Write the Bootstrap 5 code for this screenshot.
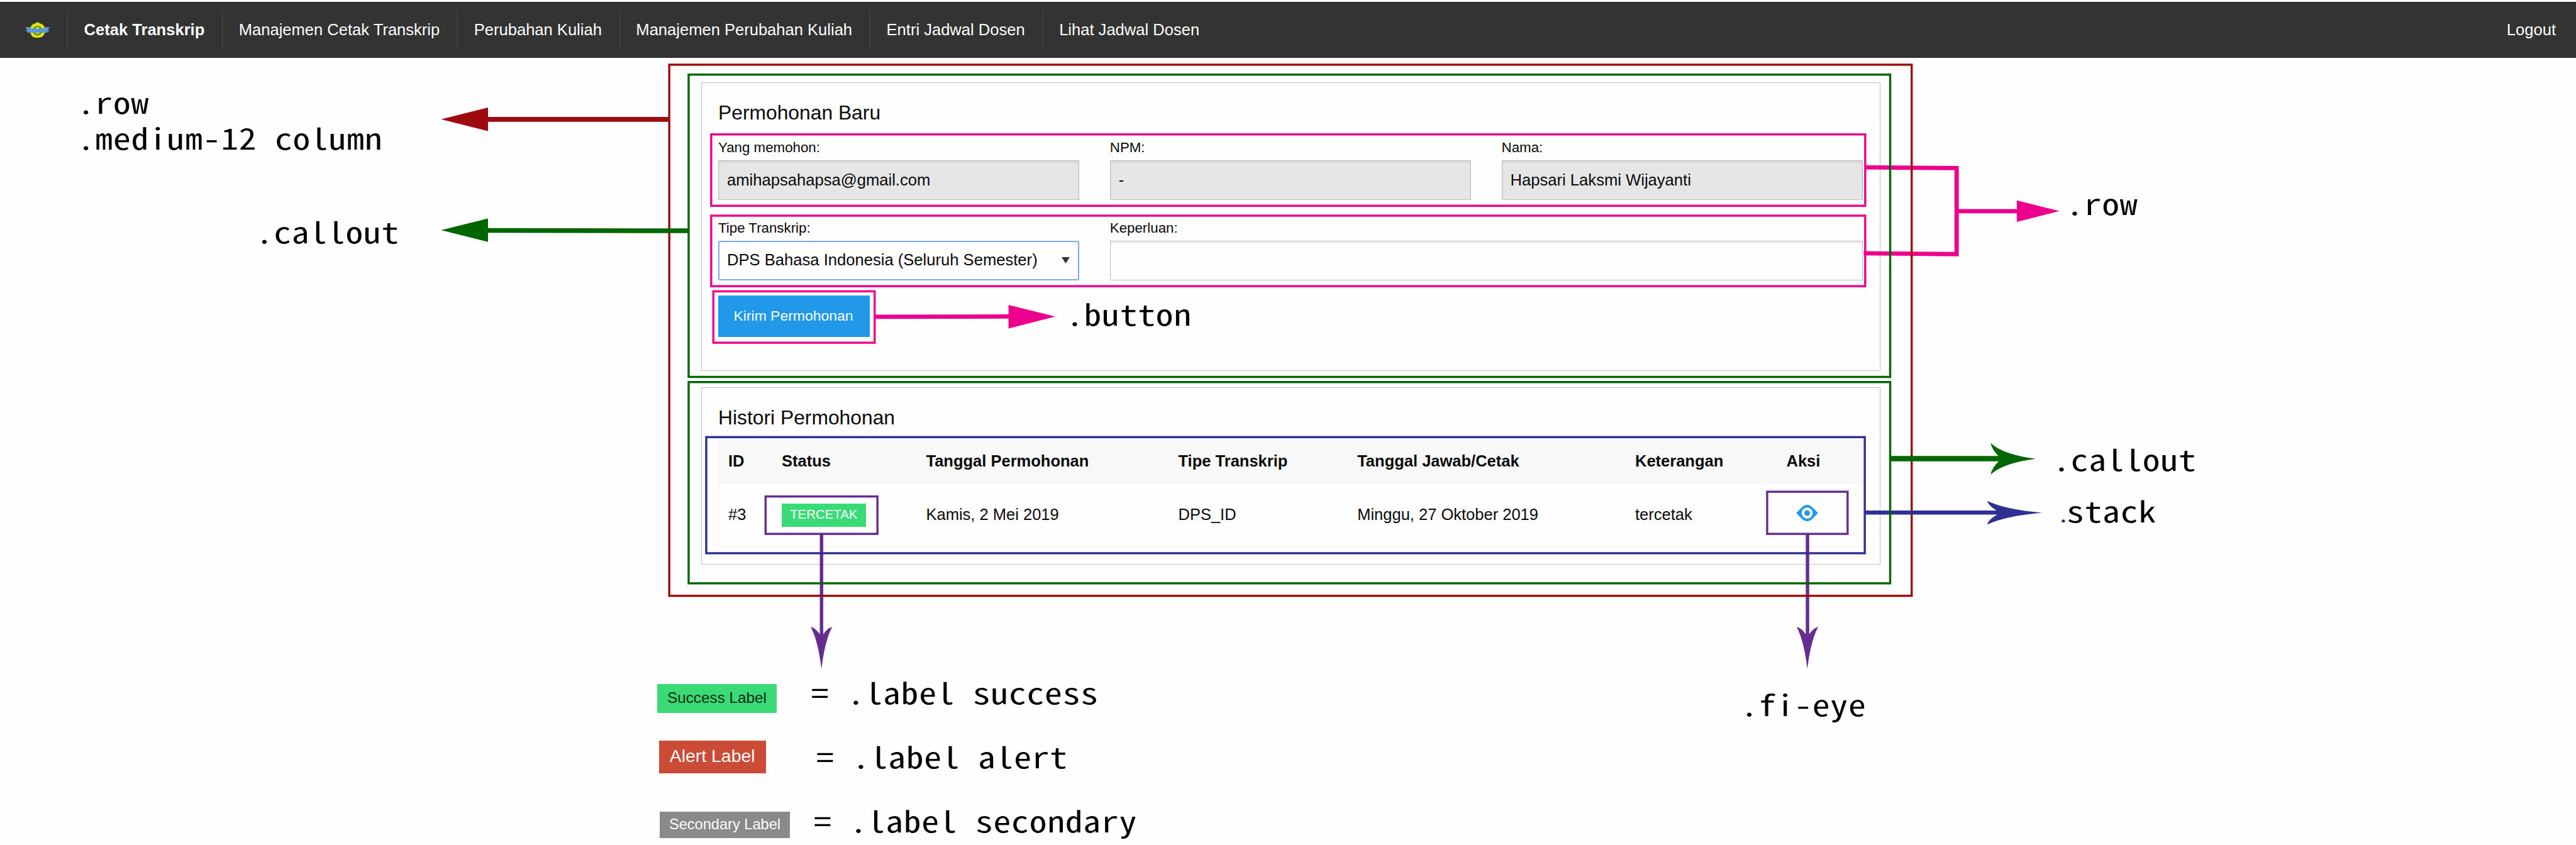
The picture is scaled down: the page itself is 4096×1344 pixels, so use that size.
<!DOCTYPE html>
<html lang="id">
<head>
<meta charset="utf-8">
<meta name="viewport" content="width=device-width, initial-scale=1">
<title>Cetak Transkrip</title>
<link rel="stylesheet" href="https://cdn.jsdelivr.net/npm/bootstrap@5.3.0/dist/css/bootstrap.min.css">
<style>
  body { width: 4096px; height: 1344px; overflow: hidden; background: #fefefe; color: #0a0a0a; font-family: "Liberation Sans", Arial, sans-serif; font-size: 25.5px; line-height: 1.5; }
  .page { display: flow-root; }
  .topbar { margin-top: 3px; height: 89px; background: #333; border-top: 1px solid #222; border-bottom: 1px solid #222; padding: 0 32px 0 0; }
  .topbar .nav-item { height: 64px; border-left: 1px solid #4c4c4c; padding: 0 27.9px 0 25.6px; white-space: nowrap; }
  .topbar .nav-link { padding: 0; color: #fff; line-height: 63px; font-size: 25.55px; }
  .brand-cell { width: 107px; padding-left: 9px; }
  .panels { margin: 39px 0 0 1114.5px; width: 1875px; }
  .panel { border: 1px solid #c0c0c0; padding: 26px 26.5px 0 26.5px; }
  .panel-new { height: 458.6px; }
  .panel-history { height: 282.4px; margin-top: 26.4px; }
  .panel h5 { font-size: 31.8px; font-weight: 400; line-height: 43px; margin: 0 0 13px; }
  .field-row { display: grid; grid-template-columns: 574.4px 574.4px 574.4px; column-gap: 48.4px; margin-bottom: 24.6px; }
  .field-wide { grid-column: span 2; }
  .field-row label { display: block; font-size: 22.3px; line-height: 41px; }
  .field-row .form-control, .field-row .form-select { height: 62.6px; border: 1px solid #c0c0c0; border-radius: 0; padding: 0 13px; font-size: 25.6px; color: #0a0a0a; background-color: #fefefe; box-shadow: inset 0 2px 3px rgba(10,10,10,.1); line-height: 60px; }
  .field-row .form-control:disabled { background-color: #e6e6e6; opacity: 1; }
  .select-wrap { position: relative; }
  .field-row .form-select { background-image: none; border: 2px solid #7aaaf2; border-radius: 3px; box-shadow: none; padding: 0 12px; line-height: 57px; }
  .select-wrap svg { position: absolute; right: 15px; bottom: 27px; }
  .btn-send { width: 241px; height: 66px; border-radius: 0; border: 0; padding: 0 2px 2px 0; background: #2199e8; color: #fefefe; font-size: 22.95px; line-height: 64px; }
  .hist { width: 1820.5px; table-layout: fixed; margin: 13.8px 0 0; border: 1px solid #f1f1f1; border-collapse: collapse; }
  .hist th, .hist td { padding: 0 0 3px 15px; text-align: left; white-space: nowrap; vertical-align: middle; border: 0; }
  .hist thead tr { height: 68.5px; background: #f8f8f8; border-bottom: 1px solid #f1f1f1; }
  .hist tbody tr { height: 101px; }
  .chip { display: flex; align-items: center; justify-content: center; white-space: nowrap; color: #fefefe; }
  .chip-status { width: 133.5px; height: 37px; font-size: 20.4px; background: #3adb76; margin-top: 3px; padding-bottom: 2px; }
  .eye-icon { display: block; margin: 0 0 4px 15.4px; }
  .legend { margin: 190px 0 0 1045px; }
  .chip-success { width: 190px; height: 45.4px; font-size: 24.3px; background: #3adb76; color: #0a2a14; padding-bottom: 2px; }
  .chip-alert { width: 170px; height: 51.8px; font-size: 28.4px; background: #cc4b37; margin: 44.6px 0 0 2.7px; padding-bottom: 4px; }
  .chip-secondary { width: 207px; height: 42.3px; font-size: 23.6px; background: #8a8a8a; margin: 60.8px 0 0 4px; padding-bottom: 1px; }
  .notes { position: absolute; left: 0; top: 0; width: 4096px; height: 1344px; pointer-events: none; }
  .notes text { font-family: "Noto Sans Mono CJK SC", "Liberation Mono", monospace; font-size: 68px; letter-spacing: .9px; fill: #000; white-space: pre; }
  .notes .dot-blue { font-size: 50px; fill: #2e3192; }
  .notes rect { fill: none; }
</style>
<script src="https://cdn.jsdelivr.net/npm/bootstrap@5.3.0/dist/js/bootstrap.bundle.min.js"></script>
</head>
<body class="position-relative">
<div class="page">
<nav class="topbar d-flex align-items-center justify-content-between">
  <ul class="nav flex-nowrap align-items-center">
    <li class="brand-cell">
      <svg class="d-block" width="100" height="40" viewBox="0 0 146 58">
        <path d="M74 10 L79 13 L85 15 L90 21 L91 28 L91 35 L88 41 L84 45 L74 47 L64 45 L60 41 L57 35 L57 28 L58 21 L63 15 L69 13 Z" fill="#e8dc12"/>
        <circle cx="74" cy="30" r="9.5" fill="#d8cf2a" stroke="#249a2c" stroke-width="3"/>
        <circle cx="74" cy="25" r="3" fill="#e8ead0"/>
        <path d="M45 22 H57 L59 25 H89 L91 22 H103 L98 27 L102 31 L97 32 V35 H51 V32 L46 31 L50 27 Z" fill="#5b9bd5"/>
        <circle cx="74" cy="29" r="3" fill="#6d8fe0"/>
      </svg>
    </li>
    <li class="nav-item"><a class="nav-link fw-bold">Cetak Transkrip</a></li>
    <li class="nav-item"><a class="nav-link">Manajemen Cetak Transkrip</a></li>
    <li class="nav-item"><a class="nav-link">Perubahan Kuliah</a></li>
    <li class="nav-item"><a class="nav-link">Manajemen Perubahan Kuliah</a></li>
    <li class="nav-item"><a class="nav-link">Entri Jadwal Dosen</a></li>
    <li class="nav-item"><a class="nav-link">Lihat Jadwal Dosen</a></li>
  </ul>
  <a class="nav-link">Logout</a>
</nav>

<main class="panels">
  <section class="panel panel-new">
    <h5>Permohonan Baru</h5>
    <div class="field-row">
      <div><label>Yang memohon:</label><input class="form-control" value="amihapsahapsa@gmail.com" disabled></div>
      <div><label>NPM:</label><input class="form-control" value="-" disabled></div>
      <div><label>Nama:</label><input class="form-control" value="Hapsari Laksmi Wijayanti" disabled></div>
    </div>
    <div class="field-row">
      <div class="select-wrap"><label>Tipe Transkrip:</label><div class="form-select">DPS Bahasa Indonesia (Seluruh Semester)</div>
        <svg width="13" height="10" viewBox="0 0 13 10"><path d="M0 0H13L6.5 10Z" fill="#333"/></svg></div>
      <div class="field-wide"><label>Keperluan:</label><input class="form-control"></div>
    </div>
    <button class="btn btn-send">Kirim Permohonan</button>
  </section>

  <section class="panel panel-history">
    <h5>Histori Permohonan</h5>
    <table class="hist">
      <colgroup><col style="width:85.5px"><col style="width:229.5px"><col style="width:401px"><col style="width:284.7px"><col style="width:441.8px"><col style="width:240.5px"><col></colgroup>
      <thead><tr><th>ID</th><th>Status</th><th>Tanggal Permohonan</th><th>Tipe Transkrip</th><th>Tanggal Jawab/Cetak</th><th>Keterangan</th><th>Aksi</th></tr></thead>
      <tbody><tr>
        <td>#3</td><td><span class="chip chip-status">TERCETAK</span></td><td>Kamis, 2 Mei 2019</td><td>DPS_ID</td><td>Minggu, 27 Oktober 2019</td><td>tercetak</td>
        <td><svg class="eye-icon" width="35" height="26" viewBox="0 0 35 26"><path fill-rule="evenodd" fill="#2199e8" d="M0 13C3 10 5 8 8 5C14-1.6 21-1.6 27 5C30 8 32 10 35 13C32 16 30 18 27 21C21 27.6 14 27.6 8 21C5 18 3 16 0 13ZM17.5 4.3A8.7 8.7 0 1 0 17.5 21.7A8.7 8.7 0 1 0 17.5 4.3Z"/><circle cx="17.5" cy="13" r="4.5" fill="#2199e8"/></svg></td>
      </tr></tbody>
    </table>
  </section>
</main>

<div class="legend">
  <div class="chip chip-success">Success Label</div>
  <div class="chip chip-alert">Alert Label</div>
  <div class="chip chip-secondary">Secondary Label</div>
</div>
</div>

<svg class="notes" viewBox="0 0 5989 1965" preserveAspectRatio="none">
  <!-- arrows to the label and icon names -->
  <path d="M1910 1242V1480M4202.3 1242V1480" stroke="#662d91" stroke-width="8"/>
  <g fill="#662d91">
    <path id="dart" d="M4177 1458Q4188 1460 4198.3 1475H4206.3Q4216 1460 4227 1458Q4210 1489 4202 1555.5Q4194 1489 4177 1458Z"/>
    <use href="#dart" x="-2292.2"/>
  </g>
  <!-- pink connectors -->
  <path d="M4336 389L4549 391V591L4333 589M4549 491H4692M2034 736.7L2347 736" stroke="#ec008c" stroke-width="10" fill="none"/>
  <path fill="#ec008c" d="M4689 466L4788 491L4689 516ZM2344.7 709L2453.8 736L2344.7 764Z"/>
  <!-- outer row -->
  <rect x="1556" y="150.5" width="2888.5" height="1235" stroke="#9e0b0f" stroke-width="5"/>
  <path d="M1556 277.6H1130" stroke="#9e0b0f" stroke-width="11"/>
  <path d="M1025.5 277.6L1134.6 250V305Z" fill="#9e0b0f"/>
  <!-- callouts -->
  <path d="M1601 536.7L1130 535.7" stroke="#006600" stroke-width="11"/>
  <path d="M1025.5 535L1134.6 508V562.5Z" fill="#006600"/>
  <path d="M4395 1066.7H4650" stroke="#006600" stroke-width="12.5"/>
  <path d="M4628 1030Q4656 1057 4733 1067Q4656 1077 4628 1104Q4631 1088 4646.5 1073V1061Q4631 1045 4628 1030Z" fill="#006600"/>
  <path d="M4336 1192H4646" stroke="#2e3192" stroke-width="9.5"/>
  <path d="M4620.3 1165Q4662 1185 4747.8 1192.3Q4662 1200 4620.3 1219.7Q4622 1209 4642.6 1197V1188Q4622 1175 4620.3 1165Z" fill="#2e3192"/>
  <g stroke="#006600" stroke-width="5">
    <rect x="1601" y="173.5" width="2793.5" height="703"/>
    <rect x="1601" y="888.5" width="2793.5" height="468"/>
  </g>
  <rect x="1642" y="1016.5" width="2693.5" height="270" stroke="#2e3192" stroke-width="5"/>
  <g stroke="#ec008c" stroke-width="5">
    <rect x="1653.5" y="312.5" width="2683" height="166"/>
    <rect x="1653.5" y="501.5" width="2683" height="164"/>
    <rect x="1658.5" y="677.5" width="375" height="119.5"/>
  </g>
  <g stroke="#662d91" stroke-width="5">
    <rect x="1780" y="1154.5" width="260" height="87"/>
    <rect x="4108.5" y="1143.5" width="187" height="98"/>
  </g>
  <!-- class names, set 1.2 times as wide as the font draws them -->
  <g transform="scale(1.197 1)">
    <text y="264"><tspan x="150">.row</tspan><tspan x="150" y="348">.medium-12 column</tspan></text>
    <text x="496.7" y="565.5">.callout</text>
    <text x="4012.8" y="500.7">.row</text>
    <text x="2070.4" y="758">.button</text>
    <text x="3987.1" y="1095">.callout</text>
    <text class="dot-blue" x="3995" y="1215">.</text>
    <text x="4013.9" y="1215">stack</text>
    <text x="3380.6" y="1666">.fi-eye</text>
    <text x="1575.5" y="1637">= .label success</text>
    <text x="1585.5" y="1786">= .label alert</text>
    <text x="1580.5" y="1936">= .label secondary</text>
  </g>
</svg>
</body>
</html>
